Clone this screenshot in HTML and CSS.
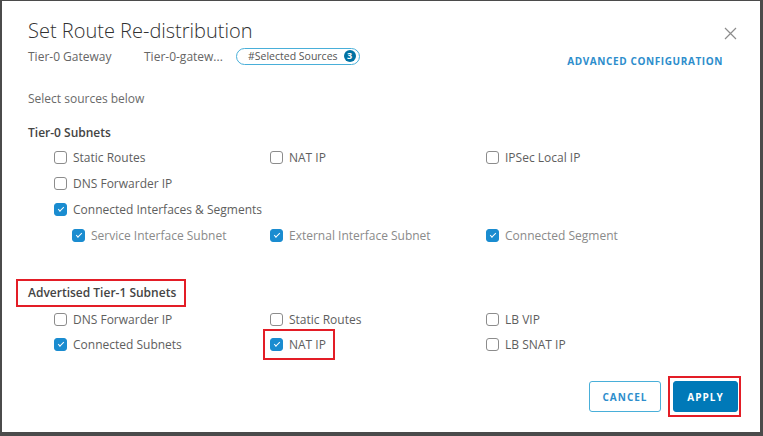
FILE: index.html
```html
<!DOCTYPE html>
<html lang="en">

<head>
    <meta charset="UTF-8">
    <meta name="viewport" content="width=device-width, initial-scale=1.0">
    <title>Set Route Re-distribution</title>
    <link rel="stylesheet" href="styles.css">
</head>

<body>
    <div class="modal">
        <div class="modalHeader">
            <div class="headLeft">
                <h3 class="title">Set Route Re-distribution</h3>
                <div class="subRow">
                    <span class="gwLabel">Tier-0 Gateway</span>
                    <span class="gwName">Tier-0-gatew...</span>
                    <span class="pill">#Selected Sources <span class="badge">3</span></span>
                </div>
            </div>
            <div class="headRight">
                <svg class="closeIcon" width="13" height="13" viewBox="0 0 13 13">
                    <path d="M1 1 L12 12 M12 1 L1 12" stroke="#8c8c8c" stroke-width="1.2" fill="none" />
                </svg>
                <a class="advLink">ADVANCED CONFIGURATION</a>
            </div>
        </div>

        <p class="hint">Select sources below</p>

        <h4 class="groupTitle">Tier-0 Subnets</h4>
        <div class="checkGrid">
            <label class="check"><span class="box"></span>Static Routes</label>
            <label class="check"><span class="box"></span>NAT IP</label>
            <label class="check"><span class="box"></span>IPSec Local IP</label>
            <label class="check wide"><span class="box"></span>DNS Forwarder IP</label>
            <label class="check wide"><span class="box checked"></span>Connected Interfaces &amp; Segments</label>
            <label class="check sub first"><span class="box checked"></span>Service Interface Subnet</label>
            <label class="check sub"><span class="box checked"></span>External Interface Subnet</label>
            <label class="check sub"><span class="box checked"></span>Connected Segment</label>
        </div>

        <h4 class="groupTitle second"><span class="mark">Advertised Tier-1 Subnets</span></h4>
        <div class="checkGrid tight">
            <label class="check"><span class="box"></span>DNS Forwarder IP</label>
            <label class="check"><span class="box"></span>Static Routes</label>
            <label class="check"><span class="box"></span>LB VIP</label>
            <label class="check"><span class="box checked"></span>Connected Subnets</label>
            <label class="check"><span class="natMark"><span class="box checked"></span>NAT IP</span></label>
            <label class="check"><span class="box"></span>LB SNAT IP</label>
        </div>

        <div class="footer">
            <button type="button" class="btn btnOutline">CANCEL</button>
            <span class="applyMark"><button type="button" class="btn btnPrimary">APPLY</button></span>
        </div>
    </div>
</body>

</html>
```

FILE: styles.css
```css
*,
*::after,
*::before {
    box-sizing: border-box;
}

body {
    margin: 0;
    background-color: #4b4b4b;
    font-family: 'Open Sans', 'Noto Sans', sans-serif;
    color: #565656;
}

.modal {
    margin: 1px 3px 0px 2px;
    height: 431px;
    background-color: #fff;
    padding: 0px 0px 0px 26px;
}

.modalHeader {
    display: flex;
    justify-content: space-between;
}

.title {
    margin: 0;
    padding-top: 17px;
    font-size: 20px;
    font-weight: 300;
    color: #313131;
    line-height: 26px;
}

.subRow {
    display: flex;
    align-items: center;
    margin-top: 3px;
    font-size: 12px;
    color: #666;
    height: 18px;
}

.gwLabel {
    width: 116px;
}

.gwName {
    width: 92px;
}

.pill {
    display: inline-flex;
    align-items: center;
    height: 17px;
    padding: 0px 3px 0px 11px;
    border: 1px solid #49afd9;
    border-radius: 9px;
    font-size: 10.5px;
    color: #555;
}

.badge {
    display: inline-block;
    width: 12px;
    height: 12px;
    margin-left: 6px;
    border-radius: 50%;
    background-color: #0072a3;
    color: #fff;
    font-size: 9px;
    font-weight: 700;
    line-height: 12px;
    text-align: center;
}

.headRight {
    display: flex;
    flex-direction: column;
    align-items: flex-end;
    padding-right: 23px;
}

.closeIcon {
    margin-top: 26px;
}

.advLink {
    margin-top: 14px;
    margin-right: 14px;
    font-size: 10px;
    font-weight: 700;
    letter-spacing: 0.6px;
    color: #2d8dcc;
}

.hint {
    margin: 23px 0px 0px;
    font-size: 12px;
    color: #6a6a6a;
    line-height: 16px;
}

.groupTitle {
    margin: 18px 0px 0px;
    font-size: 12px;
    font-weight: 600;
    color: #444;
    line-height: 16px;
}

.groupTitle.second {
    margin-top: 37px;
}

.mark {
    display: inline-block;
    margin: -6px 0px -6px -12px;
    padding: 4px 8px 4px 10px;
    border: 2px solid #e31d26;
}

.checkGrid {
    display: grid;
    grid-template-columns: 216px 216px 216px;
    grid-auto-rows: 26px;
    margin-top: 3px;
    padding-left: 26px;
}

.checkGrid.tight {
    grid-auto-rows: 25px;
    margin-top: 6px;
}

.check {
    display: flex;
    align-items: center;
    font-size: 12px;
    color: #5e5e5e;
}

.check.wide {
    grid-column: 1 / span 3;
}

.check.sub {
    color: #8a8a8a;
}

.check.sub.first {
    padding-left: 18px;
}

.box {
    display: inline-block;
    flex: none;
    width: 13px;
    height: 13px;
    margin-right: 6px;
    border: 1px solid #8c8c8c;
    border-radius: 3px;
    position: relative;
}

.box.checked {
    border-color: #1a8cd0;
    background-color: #1a8cd0;
}

.box.checked::after {
    content: "";
    position: absolute;
    left: 3px;
    top: 3px;
    width: 6px;
    height: 3px;
    border-left: 1.5px solid #fff;
    border-bottom: 1.5px solid #fff;
    transform: rotate(-45deg);
}

.natMark {
    display: inline-flex;
    align-items: center;
    margin: -6px 0px -6px -7px;
    padding: 5px 7px 5px 5px;
    border: 2px solid #e31d26;
}

.footer {
    display: flex;
    justify-content: flex-end;
    align-items: center;
    gap: 7px;
    margin-top: 19px;
    padding-right: 19px;
}

.applyMark {
    display: flex;
    padding: 3px 1px 3px 3px;
    border: 2px solid #e31d26;
}

.btn {
    height: 31px;
    border-radius: 3px;
    font-family: 'Open Sans', 'Noto Sans', sans-serif;
    font-size: 10px;
    font-weight: 700;
    letter-spacing: 1px;
}

.btnOutline {
    width: 72px;
    background-color: #fff;
    border: 1px solid #49afd9;
    color: #2d8dcc;
}

.btnPrimary {
    width: 65px;
    background-color: #0079b8;
    border: 1px solid #0079b8;
    color: #fff;
}
```
